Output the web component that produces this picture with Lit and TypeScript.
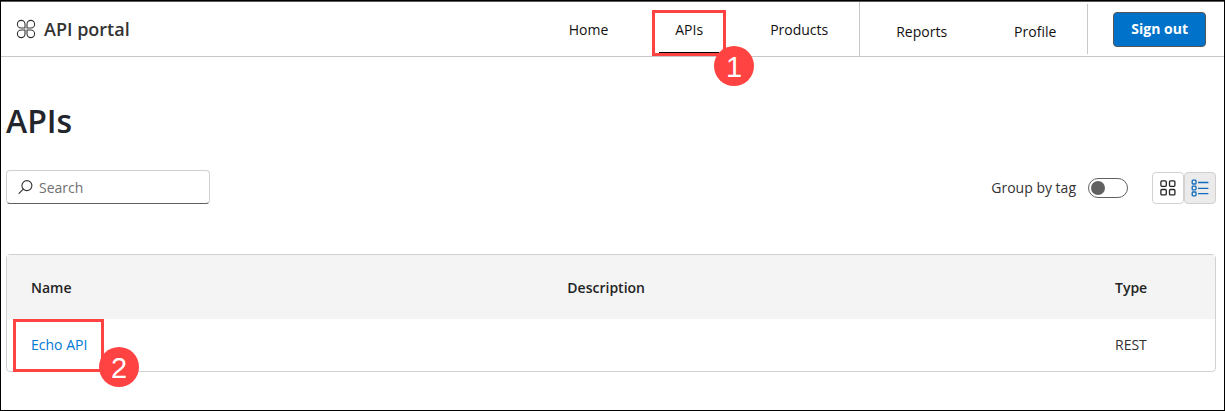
import { LitElement, html, css, svg } from "lit";
import { customElement, property, state } from "lit/decorators.js";

interface ApiRow {
  name: string;
  description: string;
  type: string;
}

const logoIcon = svg`
  <svg class="logo" viewBox="0 0 20 20" width="20" height="20" aria-hidden="true">
    <g fill="none" stroke="#333" stroke-width="1.1" stroke-linejoin="round">
      <path d="M9 9H5.2a3.8 3.8 0 1 1 3.8-3.8z" />
      <path d="M11 9V5.2a3.8 3.8 0 1 1 3.8 3.8z" />
      <path d="M9 11v3.8a3.8 3.8 0 1 1-3.8-3.8z" />
      <path d="M11 11h3.8a3.8 3.8 0 1 1-3.8 3.8z" />
    </g>
  </svg>`;

const searchIcon = svg`
  <svg viewBox="0 0 16 16" width="16" height="16" aria-hidden="true">
    <g fill="none" stroke="#333" stroke-width="1.1" stroke-linecap="round">
      <circle cx="9.9" cy="5.6" r="5" />
      <path d="M6.3 9.2L2 13.4" />
    </g>
  </svg>`;

const gridIcon = svg`
  <svg viewBox="0 0 16 16" width="16" height="16" aria-hidden="true">
    <g fill="none" stroke="#242424" stroke-width="1.3">
      <rect x="0.9" y="0.9" width="5.4" height="5.4" rx="1" />
      <rect x="9.5" y="0.9" width="5.4" height="5.4" rx="1" />
      <rect x="0.9" y="9.5" width="5.4" height="5.4" rx="1" />
      <rect x="9.5" y="9.5" width="5.4" height="5.4" rx="1" />
    </g>
  </svg>`;

const listIcon = svg`
  <svg viewBox="0 0 18 18" width="18" height="18" aria-hidden="true">
    <g fill="none" stroke="#0f6cbd" stroke-width="1.3">
      <rect x="1.2" y="1.2" width="3.8" height="3.8" rx="0.8" />
      <rect x="1.2" y="7.1" width="3.8" height="3.8" rx="0.8" />
      <rect x="1.2" y="13" width="3.8" height="3.8" rx="0.8" />
      <path d="M7 3.5h10.4M7 9.3h10.4M7 14.7h10.4" />
    </g>
  </svg>`;

@customElement("step-badge")
class StepBadge extends LitElement {
  @property({ type: Number }) step = 1;

  static styles = css`
    :host {
      position: absolute;
      pointer-events: none;
      border: 3px solid #ff4343;
      box-sizing: border-box;
    }
    .number {
      position: absolute;
      right: -31px;
      bottom: -33px;
      width: 40px;
      height: 40px;
      border-radius: 50%;
      background: #ff4343;
      color: #fff;
      font: 29px/42px "Liberation Sans", Arial, sans-serif;
      text-align: center;
    }
    :host([low]) .number {
      right: -38px;
      bottom: -18px;
    }
  `;

  render() {
    return html`<span class="number">${this.step}</span>`;
  }
}

@customElement("app-root")
class AppRoot extends LitElement {
  @state() private grouped = false;
  @state() private rows: ApiRow[] = [{ name: "Echo API", description: "", type: "REST" }];

  static styles = css`
    :host {
      display: block;
      box-sizing: border-box;
      min-height: 100vh;
      border: 1px solid #000;
      background: #fff;
      color: #242424;
      font: 14px/20px "Open Sans", "Noto Sans", sans-serif;
    }
    *,
    *::before,
    *::after {
      box-sizing: border-box;
    }
    .header {
      display: flex;
      align-items: stretch;
      height: 56px;
      border-top: 1px solid #5a5a5a;
      border-bottom: 1px solid #c8c8c8;
      padding-right: 18px;
    }
    .brand {
      display: flex;
      align-items: center;
      gap: 8px;
      margin-right: auto;
      padding-left: 15px;
      color: #333;
      font-size: 18px;
      font-weight: 600;
    }
    .logo {
      display: block;
    }
    .nav {
      display: flex;
    }
    .links {
      display: flex;
      gap: 35px;
      padding: 0 15px;
      border-right: 1px solid #c8c8c8;
    }
    .account {
      margin: 2px 0;
      padding-left: 20px;
    }
    .link {
      position: relative;
      padding: 18px 16px 0;
      color: #111;
      text-decoration: none;
    }
    .current::after {
      content: "";
      position: absolute;
      left: 0;
      right: 0;
      top: 50px;
      height: 1px;
      background: #000;
    }
    .nav-step {
      left: -7px;
      right: -7px;
      top: 8px;
      height: 46px;
    }
    .signout {
      align-self: center;
      height: 35px;
      margin-left: 25px;
      padding: 0 17px;
      border: 1px solid #555;
      border-radius: 4px;
      background: #0072c9;
      color: #fff;
      font: inherit;
      font-weight: 700;
    }
    .main {
      padding: 40px 8px 38px 5px;
    }
    .title {
      margin: 0;
      color: #22252b;
      font-size: 32px;
      font-weight: 600;
      line-height: 48px;
    }
    .toolbar {
      display: flex;
      align-items: center;
      margin: 25px 0 50px;
    }
    .search {
      display: flex;
      align-items: center;
      gap: 6px;
      width: 204px;
      height: 34px;
      margin-right: auto;
      padding: 2px 10px 0;
      border: 1px solid #d1d1d1;
      border-bottom-color: #616161;
      border-radius: 4px;
    }
    .search-input {
      flex: 1;
      min-width: 0;
      border: 0;
      padding: 0;
      outline: 0;
      background: none;
      color: inherit;
      font: inherit;
    }
    .search-input::placeholder {
      color: #707070;
      opacity: 1;
    }
    .controls {
      display: flex;
      align-items: center;
      gap: 24px;
      padding-top: 2px;
    }
    .group {
      display: flex;
      align-items: center;
      gap: 12px;
      color: #333;
    }
    .switch {
      appearance: none;
      width: 40px;
      height: 20px;
      margin: 0;
      padding: 2px;
      border: 1px solid #616161;
      border-radius: 10px;
      background: #fff;
    }
    .switch::before {
      content: "";
      display: block;
      width: 14px;
      height: 14px;
      border-radius: 50%;
      background: #616161;
    }
    .switch:checked::before {
      margin-left: auto;
    }
    .views {
      display: flex;
    }
    .view {
      display: grid;
      place-items: center;
      width: 32px;
      height: 32px;
      padding: 0;
      border: 1px solid #d1d1d1;
      border-radius: 4px;
      background: #fff;
    }
    .selected {
      background: #ebebeb;
    }
    .table {
      width: 100%;
      table-layout: fixed;
      border: 1px solid #d1d1d1;
      border-radius: 4px;
      border-spacing: 0;
    }
    .head-cell,
    .cell {
      padding: 0 24px;
      text-align: left;
    }
    .head-cell {
      height: 64px;
      padding-top: 2px;
      background: #f4f4f4;
      font-weight: 600;
    }
    .cell {
      position: relative;
      height: 52px;
      color: #333;
    }
    .type-column {
      width: 124px;
    }
    .name-column {
      width: 44.4%;
    }
    .api-link {
      color: #0078d4;
      text-decoration: none;
    }
    .row-step {
      left: 6px;
      top: 0;
      width: 91px;
      height: 53px;
    }
  `;

  render() {
    return html`
      <header class="header">
        <div class="brand">${logoIcon}<span>API portal</span></div>
        <nav class="nav">
          <div class="links">
            <a class="link" href="#home">Home</a>
            <a class="link current" href="#apis" aria-current="page"
              >APIs<step-badge class="nav-step" step="1"></step-badge
            ></a>
            <a class="link" href="#products">Products</a>
          </div>
          <div class="links account">
            <a class="link" href="#reports">Reports</a>
            <a class="link" href="#profile">Profile</a>
          </div>
        </nav>
        <button class="signout" type="button">Sign out</button>
      </header>
      <main class="main">
        <h1 class="title">APIs</h1>
        <div class="toolbar">
          <label class="search">
            ${searchIcon}
            <input class="search-input" type="text" placeholder="Search" aria-label="Search" />
          </label>
          <div class="controls">
            <label class="group">
              Group by tag
              <input
                class="switch"
                type="checkbox"
                role="switch"
                .checked=${this.grouped}
                @change=${(e: Event) => (this.grouped = (e.target as HTMLInputElement).checked)}
              />
            </label>
            <div class="views">
              <button class="view" type="button" aria-label="Tiles">${gridIcon}</button>
              <button class="view selected" type="button" aria-label="List">${listIcon}</button>
            </div>
          </div>
        </div>
        <table class="table">
          <thead>
            <tr>
              <th class="head-cell name-column" scope="col">Name</th>
              <th class="head-cell" scope="col">Description</th>
              <th class="head-cell type-column" scope="col">Type</th>
            </tr>
          </thead>
          <tbody>
            ${this.rows.map(
              (row, i) => html`
                <tr>
                  <td class="cell">
                    <a class="api-link" href="#echo-api">${row.name}</a>
                    ${i === 0 ? html`<step-badge class="row-step" low step="2"></step-badge>` : ""}
                  </td>
                  <td class="cell">${row.description}</td>
                  <td class="cell">${row.type}</td>
                </tr>
              `,
            )}
          </tbody>
        </table>
      </main>
    `;
  }
}
